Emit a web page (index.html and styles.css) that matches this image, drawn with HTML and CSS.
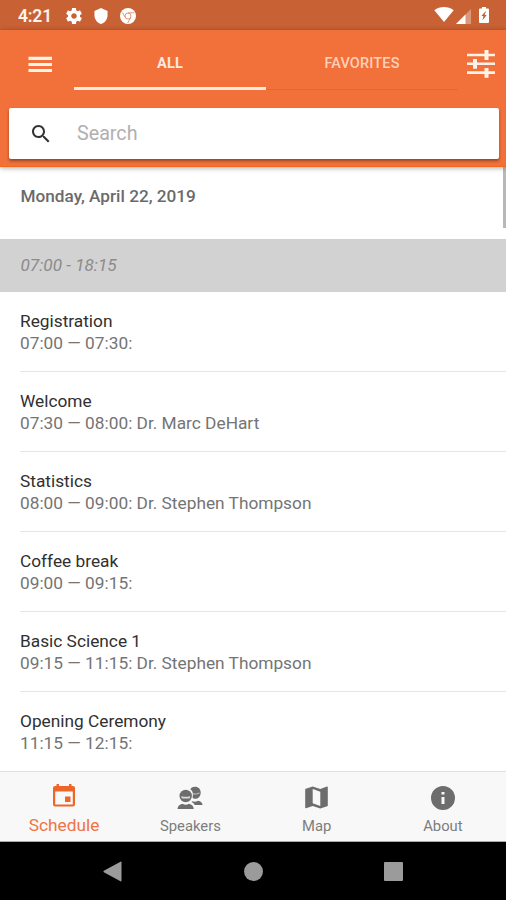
FILE: index.html
```html
<!DOCTYPE html>
<html lang="en">
<head>
<meta charset="utf-8">
<title>Schedule</title>
<link rel="stylesheet" href="styles.css">
</head>
<body>
<div class="status">
  <span class="clock">4:21</span>
  <svg class="st-icon" viewBox="2 2 20 20"><path fill="#fff" d="M19.43 12.98c.04-.32.07-.64.07-.98s-.03-.66-.07-.98l2.11-1.65c.19-.15.24-.42.12-.64l-2-3.46c-.12-.22-.39-.3-.61-.22l-2.49 1c-.52-.4-1.08-.73-1.69-.98l-.38-2.65C14.46 2.18 14.25 2 14 2h-4c-.25 0-.46.18-.49.42l-.38 2.65c-.61.25-1.17.59-1.69.98l-2.49-1c-.23-.09-.49 0-.61.22l-2 3.46c-.13.22-.07.49.12.64l2.11 1.65c-.04.32-.07.65-.07.98s.03.66.07.98l-2.11 1.65c-.19.15-.24.42-.12.64l2 3.46c.12.22.39.3.61.22l2.49-1c.52.4 1.08.73 1.69.98l.38 2.65c.03.24.24.42.49.42h4c.25 0 .46-.18.49-.42l.38-2.65c.61-.25 1.17-.59 1.69-.98l2.49 1c.23.09.49 0 .61-.22l2-3.46c.12-.22.07-.49-.12-.64l-2.11-1.65zM12 15.5c-1.930 0-3.500-1.570-3.500-3.500s1.570-3.500 3.500-3.500 3.500 1.570 3.500 3.500-1.570 3.500-3.500 3.500z"/></svg>
  <svg class="st-icon shield" viewBox="1 1 22 22"><path fill="#fff" d="M12 1 3 5v6c0 5.550 3.840 10.740 9 12 5.160-1.260 9-6.450 9-12V5z"/></svg>
  <svg class="st-icon" viewBox="0 0 16 16"><circle cx="8" cy="8" r="8" fill="#fff"/><g fill="none" stroke="#dc9a7a" stroke-width="1"><circle cx="8" cy="8" r="3"/><path d="M8 4.800h6.300M5.300 9.600 2.400 4.500M10.700 9.700 7.700 15"/></g></svg>
  <span class="spacer"></span>
  <svg class="wifi" viewBox="0 0 20 15"><path fill="#fff" d="M10 15 .3 3.200C6-1 14-1 19.700 3.200z"/></svg>
  <svg class="signal" viewBox="0 0 15 15"><path fill="#fff" opacity=".35" d="M0 15 15 0v15z"/><path fill="#fff" d="M0 15 9.500 5.500V15z"/></svg>
  <svg class="battery" viewBox="0 0 10 16"><path fill="#fff" d="M3 0h4v1.600h2q1 0 1 1V15q0 1-1 1H1q-1 0-1-1V2.600q0-1 1-1h2z"/><path fill="#c86134" d="M7 3.800 2.300 9h2.100L3.500 13.300 7.800 8H5.700z"/></svg>
</div>
<header class="header">
  <div class="toolbar">
    <svg class="burger" viewBox="0 0 24 18"><path fill="#fff3e9" d="M.5 .8H24v3.100H.5zM.5 6.900H24V10H.5zM.5 13H24v3.100H.5z"/></svg>
    <div class="tabs"><div class="tab active">ALL</div><div class="tab">FAVORITES</div></div>
    <svg class="filter" viewBox="0 0 28 28"><path fill="#fff3e9" d="M0 3.700h17.500V0h4v3.700H28v2.600h-6.500V10h-4V6.300H0zM0 12.500h6V9h4v3.500h18v2.600H10v3.600H6v-3.600H0zM0 21.300h17.500V18h4v3.300H28v2.600h-6.500v3.800h-4v-3.800H0z"/></svg>
  </div>
  <div class="search">
    <svg class="mag" viewBox="3 3 18 18"><path fill="#333" d="M15.500 14h-.79l-.28-.27C15.410 12.590 16 11.110 16 9.500 16 5.910 13.090 3 9.500 3S3 5.910 3 9.500 5.910 16 9.500 16c1.610 0 3.090-.59 4.230-1.570l.27.28v.79l5 4.990L20.490 19l-4.990-5zm-6 0C7.010 14 5 11.990 5 9.500S7.010 5 9.500 5 14 7.010 14 9.500 11.990 14 9.500 14z"/></svg>
    <span>Search</span>
  </div>
</header>
<main class="content">
  <div class="scrollbar"></div>
  <div class="date">Monday, April 22, 2019</div>
  <div class="range"><span>07:00 - 18:15</span></div>
  <ul class="list">
    <li><h3>Registration</h3><p>07:00 — 07:30:</p></li>
    <li><h3>Welcome</h3><p>07:30 — 08:00: Dr. Marc DeHart</p></li>
    <li><h3>Statistics</h3><p>08:00 — 09:00: Dr. Stephen Thompson</p></li>
    <li><h3>Coffee break</h3><p>09:00 — 09:15:</p></li>
    <li><h3>Basic Science 1</h3><p>09:15 — 11:15: Dr. Stephen Thompson</p></li>
    <li><h3>Opening Ceremony</h3><p>11:15 — 12:15:</p></li>
  </ul>
</main>
<nav class="bottom">
  <div class="item selected">
    <svg width="22" height="23" viewBox="0 0 22 23"><path fill="#ed6629" fill-rule="evenodd" d="M3.500 0h2.500v2h10V0h2.500v2h1.500q2 0 2 2v16.500q0 2-2 2H2q-2 0-2-2V4q0-2 2-2h1.500zM2.200 7.600V20.400h17.600V7.600zM12 12.500h5.500V18H12z"/></svg>
    <span>Schedule</span>
  </div>
  <div class="item">
    <svg width="26" height="24" viewBox="0 0 26 24"><g fill="#6d6d6d"><path d="M13.300 3.300C14.500 1.500 16 .8 18 .8c3.400 0 5.700 2.400 5.700 5.600 0 3.200-2 5.900-4.700 6.400-1.600.2-2.800-.4-3.500-1.400 1-3.300.5-6.300-2.200-8.100z"/><path d="M15.500 15.300c1.600.8 3.700.6 5.500-.5 2.900.6 4.300 1.900 4.600 4.200h-7.900c-.6-1.300-1.700-2.300-3.300-3z"/><circle cx="8.700" cy="10" r="6.200"/><path d="M.5 23c.3-3 2-4.500 5-5.200q3.200 2 6.400 0c3 .7 4.600 2.200 4.900 5.200z"/></g><path fill="#dcdcdc" d="M4.300 10.300q4.400 1 8.800 0c0 .9-.1 1.300-.3 1.900q-4.100.7-8.200 0c-.2-.6-.3-1-.3-1.900z"/><path fill="none" stroke="#c8c8c8" stroke-width="1" d="M15.800 7.800q3.600.9 6.700-.8"/></svg>
    <span>Speakers</span>
  </div>
  <div class="item">
    <svg width="23" height="23" viewBox="0 0 23 23"><path fill="#6d6d6d" fill-rule="evenodd" d="M22 .5 15.300 3 7.700.5.800 2.800q-.6.200-.6.800v18q0 .8.800.6L7.700 20l7.600 2.500 6.900-2.300q.6-.2.600-.8V1.300q0-.8-.8-.8zM7.700 3.100l7.600 2.600v14.200l-7.600-2.600z"/></svg>
    <span>Map</span>
  </div>
  <div class="item">
    <svg width="24" height="24" viewBox="0 0 24 24"><path fill="#6d6d6d" fill-rule="evenodd" d="M12 0a12 12 0 1 0 0 24 12 12 0 0 0 0-24zm-1.500 6h3v2.500h-3zm0 5h3v7h-3z"/></svg>
    <span>About</span>
  </div>
</nav>
<footer class="system">
  <svg width="19" height="21" viewBox="0 0 19 21"><path fill="#9b9b9b" d="M18.500 1.200v18.600q0 1-1 .5L.8 11.200q-.8-.7 0-1.400L17.500.7q1-.5 1 .5z"/></svg>
  <span class="home"></span>
  <span class="recent"></span>
</footer>
</body>
</html>
```
FILE: styles.css
```css
* { box-sizing: border-box; }
body { margin: 0; width: 506px; height: 900px; overflow: hidden; display: flex; flex-direction: column; font-family: Roboto, "Liberation Sans", sans-serif; background: #fff; }
svg { display: block; flex: none; }
.status { height: 30px; flex: none; background: #c86134; display: flex; align-items: center; padding: 1px 17px 0 18px; }
.clock { color: #fff4ec; font-size: 17.500px; font-weight: 600; width: 48px; letter-spacing: -.2px; }
.st-icon { width: 16px; height: 16px; margin-right: 11px; }
.spacer { flex: 1; }
.wifi { width: 20px; height: 15px; margin-right: 2px; margin-top: -2px; }
.signal { width: 15px; height: 15px; margin-right: 8px; margin-top: 1px; }
.battery { width: 10px; height: 16px; margin-top: -1px; }
.header { height: 137px; flex: none; background: #f2703a; position: relative; z-index: 1; box-shadow: 0 1px 5px rgba(0,0,0,.35); padding: 0 7px 0 9px; border-bottom: 1px solid #ee6a1e; }
.toolbar { height: 78px; display: flex; padding: 0 4px 0 19px; }
.burger { width: 24px; height: 18px; margin: 26px 22px 0 0; }
.tabs { display: flex; height: 60px; }
.tab { width: 192px; height: 60px; padding-top: 6px; border-bottom: 1px solid #df6834; color: #ffd0b8; font-size: 14.500px; font-weight: 500; line-height: 56px; text-align: center; letter-spacing: .15px; }
.tab.active { color: #ffeadd; border-bottom: 3px solid #ffeadd; font-weight: 700; }
.filter { width: 28px; height: 28px; margin: 20px 0 0 9px; }
.search { height: 51px; background: #fff; border-radius: 2px; box-shadow: 0 2px 3px rgba(60,30,10,.5); display: flex; align-items: center; padding-left: 23px; font-size: 19.700px; color: #b0b0b0; }
.mag { width: 18px; height: 18px; margin-right: 27px; }
.content { flex: 1; min-height: 0; overflow: hidden; position: relative; }
.scrollbar { position: absolute; right: 0; top: 0; width: 3px; height: 61px; background: #b8b8b8; }
.date { height: 72px; padding: 18px 20px 0 20.500px; font-size: 17.200px; line-height: 22px; font-weight: 500; color: #6a6a6a; }
.range { height: 53px; background: #d2d2d2; padding-left: 20.500px; font-size: 17.200px; line-height: 53px; font-style: italic; color: #8b8b8b; }
.list { list-style: none; margin: 0; padding: 0 0 0 20px; }
.list li { height: 80px; padding-top: 18px; border-bottom: 1px solid #e6e6e6; }
.list h3, .list p { margin: 0; font-size: 17.300px; line-height: 22px; font-weight: 400; }
.list h3 { color: #303030; }
.list p { color: #747474; }
.bottom { height: 71px; flex: none; background: #f8f8f8; border-top: 1px solid #e0e0e0; border-bottom: 1px solid #aaa; display: grid; grid-template-columns: repeat(4, 1fr); padding-left: 1px; }
.item { display: flex; flex-direction: column; align-items: center; padding-top: 14px; font-size: 14.800px; line-height: 18px; color: #7d7d7d; }
.item span { margin-top: auto; padding-bottom: 6px; }
.item.selected { padding-top: 12px; font-size: 17.300px; color: #ef7443; }
.item.selected span { padding-bottom: 7px; }
.system { height: 58px; flex: none; background: #000; display: flex; align-items: center; padding-left: 103px; }
.home { width: 19px; height: 19px; border-radius: 50%; background: #9b9b9b; margin-left: 122px; }
.recent { width: 19px; height: 19px; border-radius: 1px; background: #9b9b9b; margin-left: 121px; }
```
